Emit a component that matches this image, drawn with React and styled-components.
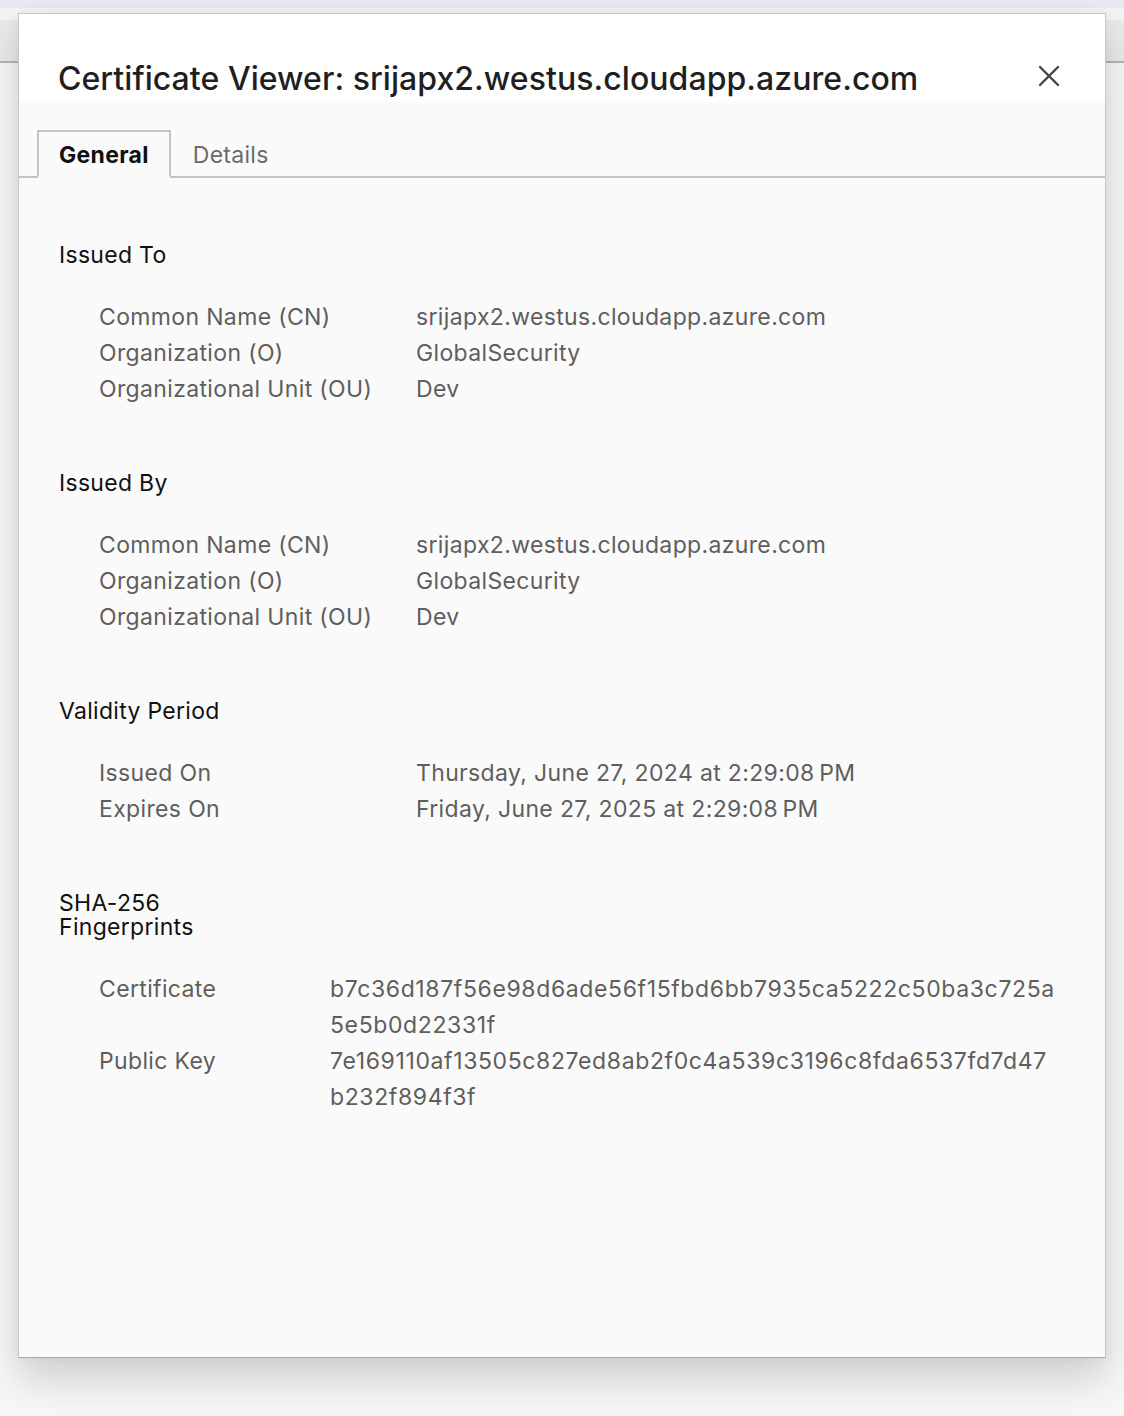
import React from "react";
import styled, { createGlobalStyle } from "styled-components";

const GlobalStyle = createGlobalStyle`
  html, body {
    margin: 0;
    padding: 0;
    background: #f6f6f6;
    font-family: Inter, "Noto Sans", "Liberation Sans", sans-serif;
    -webkit-font-smoothing: antialiased;
  }
`;

const Page = styled.div`
  position: relative;
  width: 1124px;
  height: 1416px;
  overflow: hidden;
  background: #f7f7f7;
`;

const TopBar = styled.div`
  height: 8px;
  background: #e6e9ef;
`;

const Gap = styled.div`
  height: 12px;
  background: #f3f3f3;
`;

const Toolbar = styled.div`
  height: 41px;
  background: #e9e9e9;
  border-bottom: 2px solid #b4b4b4;
`;

const Dialog = styled.div`
  position: absolute;
  left: 18px;
  top: 13px;
  width: 1086px;
  height: 1343px;
  background: #fafafa;
  border: 1px solid #c8c8c8;
  border-bottom-color: #a8a8a8;
  box-shadow: 0 22px 38px rgba(0, 0, 0, 0.16), 0 0 10px rgba(0, 0, 0, 0.06);
  display: flex;
  flex-direction: column;
`;

const Header = styled.div`
  height: 88px;
  background: #ffffff;
  display: flex;
  align-items: flex-end;
  justify-content: space-between;
  padding: 0 40px 0 39px;
  box-sizing: border-box;
`;

const Title = styled.h1`
  margin: 0 0 3px 0;
  font-size: 32px;
  font-weight: 500;
  color: #1f1f1f;
  letter-spacing: 0.05px;
  line-height: 40px;
`;

const CloseButton = styled.button`
  border: none;
  background: none;
  padding: 0;
  width: 24px;
  height: 24px;
  margin-bottom: 14px;
  margin-right: 4px;
  cursor: pointer;
  display: flex;
  align-items: center;
  justify-content: center;
`;

const Tabs = styled.div`
  margin-top: 28px;
  display: flex;
  align-items: flex-end;
  padding-left: 18px;
  border-bottom: 2px solid #c4c4c4;
  height: 48px;
  box-sizing: border-box;
`;

const Tab = styled.div`
  height: 48px;
  box-sizing: border-box;
  padding: 2px 20px 0 20px;
  margin-bottom: -2px;
  display: flex;
  align-items: center;
  font-size: 23px;
  letter-spacing: 0.3px;
  font-weight: ${(p) => (p.$active ? 700 : 400)};
  color: ${(p) => (p.$active ? "#111" : "#6b6b6b")};
  background: ${(p) => (p.$active ? "#fafafa" : "transparent")};
  border: 2px solid ${(p) => (p.$active ? "#c4c4c4" : "transparent")};
  border-bottom: 2px solid ${(p) => (p.$active ? "#fafafa" : "transparent")};
`;

const Content = styled.div`
  padding: 65px 40px 0 40px;
  display: flex;
  flex-direction: column;
  gap: 64px;
`;

const Section = styled.section`
  display: flex;
  flex-direction: column;
  gap: 32px;
`;

const Heading = styled.h2`
  margin: 0;
  font-size: 23px;
  font-weight: 400;
  letter-spacing: 0.3px;
  line-height: 24px;
  color: #111;
  max-width: 180px;
`;

const Fields = styled.div`
  display: grid;
  grid-template-columns: ${(p) => p.$labelWidth}px 1fr;
  padding-left: 40px;
  font-size: 23px;
  letter-spacing: 0.35px;
  line-height: 36px;
  color: #5e5e5e;
`;

const Label = styled.div``;

const Value = styled.div`
  letter-spacing: ${(p) => (p.$hex ? "0.62px" : "0.35px")};
`;

const Line = styled.div`
  white-space: nowrap;
`;

const sections = [
  {
    title: "Issued To",
    labelWidth: 317,
    rows: [
      ["Common Name (CN)", ["srijapx2.westus.cloudapp.azure.com"]],
      ["Organization (O)", ["GlobalSecurity"]],
      ["Organizational Unit (OU)", ["Dev"]],
    ],
  },
  {
    title: "Issued By",
    labelWidth: 317,
    rows: [
      ["Common Name (CN)", ["srijapx2.westus.cloudapp.azure.com"]],
      ["Organization (O)", ["GlobalSecurity"]],
      ["Organizational Unit (OU)", ["Dev"]],
    ],
  },
  {
    title: "Validity Period",
    labelWidth: 317,
    rows: [
      ["Issued On", ["Thursday, June 27, 2024 at 2:29:08\u202FPM"]],
      ["Expires On", ["Friday, June 27, 2025 at 2:29:08\u202FPM"]],
    ],
  },
  {
    title: "SHA-256 Fingerprints",
    labelWidth: 231,
    hex: true,
    rows: [
      ["Certificate", ["b7c36d187f56e98d6ade56f15fbd6bb7935ca5222c50ba3c725a", "5e5b0d22331f"]],
      ["Public Key", ["7e169110af13505c827ed8ab2f0c4a539c3196c8fda6537fd7d47", "b232f894f3f"]],
    ],
  },
];

const CloseIcon = () => (
  <svg width="22" height="22" viewBox="0 0 22 22">
    <path d="M2 2 L20 20 M20 2 L2 20" stroke="#444" strokeWidth="2.4" strokeLinecap="round" />
  </svg>
);

export default function App() {
  return (
    <Page>
      <GlobalStyle />
      <TopBar />
      <Gap />
      <Toolbar />
      <Dialog>
        <Header>
          <Title>Certificate Viewer: srijapx2.westus.cloudapp.azure.com</Title>
          <CloseButton aria-label="Close">
            <CloseIcon />
          </CloseButton>
        </Header>
        <Tabs>
          <Tab $active>General</Tab>
          <Tab>Details</Tab>
        </Tabs>
        <Content>
          {sections.map((s) => (
            <Section key={s.title}>
              <Heading>{s.title}</Heading>
              <Fields $labelWidth={s.labelWidth}>
                {s.rows.map(([label, lines]) => (
                  <React.Fragment key={label}>
                    <Label>{label}</Label>
                    <Value $hex={s.hex}>
                      {lines.map((l) => (
                        <Line key={l}>{l}</Line>
                      ))}
                    </Value>
                  </React.Fragment>
                ))}
              </Fields>
            </Section>
          ))}
        </Content>
      </Dialog>
    </Page>
  );
}
